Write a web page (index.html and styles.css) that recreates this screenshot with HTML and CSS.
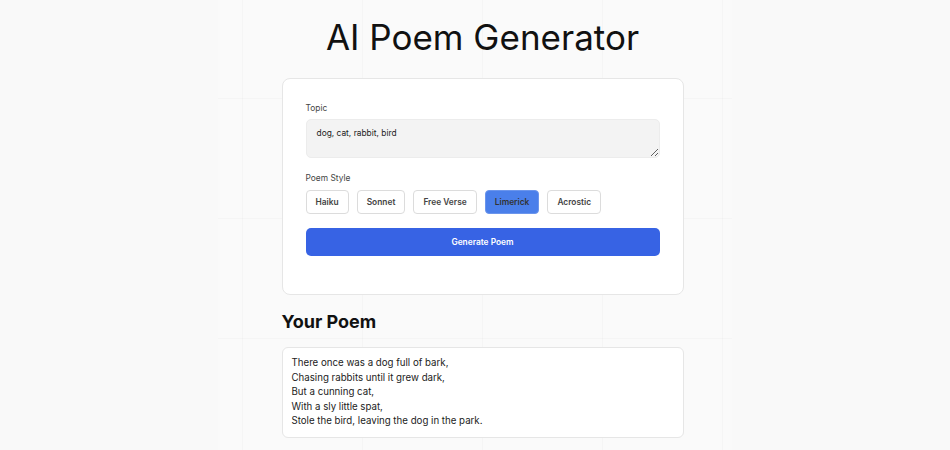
FILE: index.html
```html
<!DOCTYPE html>
<html lang="en">
<head>
    <meta charset="UTF-8">
    <meta name="viewport" content="width=device-width, initial-scale=1.0">
    <title>AI Poem Generator</title>
    <link rel="stylesheet" href="styles.css">
</head>
<body>
    <div class="page">
        <h1>AI Poem Generator</h1>
        <form class="card" id="poemForm">
            <label class="field-label" for="topic">Topic</label>
            <textarea id="topic" name="topic">dog, cat, rabbit, bird</textarea>

            <span class="field-label">Poem Style</span>
            <div class="styles">
                <button type="button" class="style-btn">Haiku</button>
                <button type="button" class="style-btn">Sonnet</button>
                <button type="button" class="style-btn">Free Verse</button>
                <button type="button" class="style-btn active">Limerick</button>
                <button type="button" class="style-btn">Acrostic</button>
            </div>

            <button type="submit" class="generate">Generate Poem</button>
        </form>

        <h2>Your Poem</h2>
        <div class="poem">
            There once was a dog full of bark,<br>
            Chasing rabbits until it grew dark,<br>
            But a cunning cat,<br>
            With a sly little spat,<br>
            Stole the bird, leaving the dog in the park.
        </div>
    </div>
</body>
</html>
```

FILE: styles.css
```css
body {
    font-family: 'Inter', 'Liberation Sans', sans-serif;
    background-color: #f9f9f9;
    margin: 0;
    color: #111;
}
.page {
    width: 514px;
    margin: 0 auto;
    padding-left: 15px;
    box-sizing: border-box;
    min-height: 100vh;
    display: flex;
    flex-direction: column;
    align-items: center;
    background-color: #fafafa;
    background-image:
        linear-gradient(to right, rgba(0, 0, 0, 0.018) 1px, transparent 1px),
        linear-gradient(to bottom, rgba(0, 0, 0, 0.018) 1px, transparent 1px);
    background-size: 120px 120px;
    background-position: 24px 98px;
}
h1 {
    font-size: 35px;
    font-weight: 400;
    line-height: 42px;
    margin: 16px 0 20px;
    color: #111;
}
.card {
    width: 402px;
    box-sizing: border-box;
    background: white;
    border: 1px solid #e6e6e6;
    border-radius: 8px;
    padding: 23px 23px 38px;
    display: flex;
    flex-direction: column;
}
.field-label {
    font-size: 8.4px;
    line-height: 13px;
    color: #444;
    margin-bottom: 4px;
}
textarea {
    height: 39px;
    box-sizing: border-box;
    border: 1px solid #ececec;
    border-radius: 5px;
    background: #f3f3f3;
    padding: 8px 10px;
    font-family: inherit;
    font-size: 8.4px;
    color: #222;
    margin-bottom: 14px;
    resize: vertical;
}
.styles {
    display: flex;
    gap: 8px;
    margin-top: 1px;
    margin-bottom: 14px;
}
.style-btn {
    height: 24px;
    padding: 0 9px;
    background: white;
    border: 1px solid #dcdcdc;
    border-radius: 4px;
    font-family: inherit;
    font-size: 8.4px;
    font-weight: 600;
    color: #444;
    cursor: pointer;
}
.style-btn.active {
    background: #4a7fea;
    border-color: #6b95ec;
    color: #333;
}
.generate {
    height: 28px;
    background: #3763e4;
    color: white;
    border: none;
    border-radius: 5px;
    font-family: inherit;
    font-size: 8.4px;
    font-weight: 600;
    cursor: pointer;
}
h2 {
    width: 402px;
    margin: 16px 0 14px;
    font-size: 18px;
    font-weight: 700;
    line-height: 22px;
}
.poem {
    width: 402px;
    box-sizing: border-box;
    background: white;
    border: 1px solid #e6e6e6;
    border-radius: 6px;
    padding: 8px 9px;
    font-size: 9.7px;
    line-height: 14.5px;
    color: #222;
}
```
